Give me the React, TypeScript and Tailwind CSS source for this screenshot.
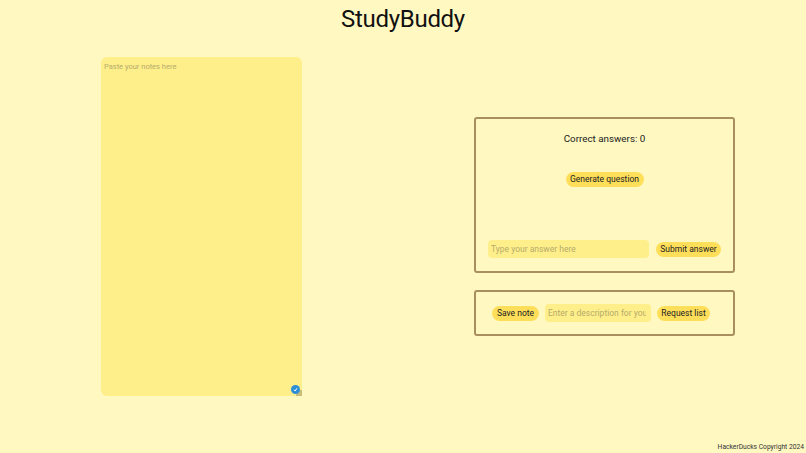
export default function App() {
  return (
    <div className="w-[806px] h-[453px] overflow-hidden flex flex-col bg-[#fff8c1] text-[#222] font-['Roboto','Liberation_Sans',sans-serif]">
      <h1 className="h-[57px] text-center text-[24px] tracking-[-0.3px] leading-[38px] text-[#111]">StudyBuddy</h1>

      <div className="flex h-[339px]">
        <div className="relative ml-[101px] w-[201px] h-[339px]">
          <textarea
            className="block w-full h-full resize-none rounded-[6px] bg-[#ffef8a] px-[3px] py-[4px] text-[7.5px] leading-[11px] outline-none placeholder:text-[#b5ab6c]"
            placeholder="Paste your notes here"
          />
          <div className="absolute right-0 bottom-0 w-[6px] h-[6px] bg-[#c9bd7c]" />
          <div className="absolute right-[2px] bottom-[2px] w-[9px] h-[9px] rounded-full bg-[#2b8fd8] flex items-center justify-center">
            <svg width="5" height="5" viewBox="0 0 10 10" fill="none" stroke="#fff" strokeWidth="2">
              <path d="M2 5.5 4.2 8 8 2.5" />
            </svg>
          </div>
        </div>

        <div className="ml-[172px] w-[261px] pt-[60px] flex flex-col gap-[17px]">
          <div className="h-[156px] rounded-[3px] border-2 border-[#a98f5f] flex flex-col items-center">
            <p className="mt-[12px] text-[9.8px] leading-[15px]">Correct answers: 0</p>
            <button className="mt-[26px] w-[78px] h-[15px] rounded-full bg-[#ffdf5a] text-[8.5px] leading-[15px] whitespace-nowrap">Generate question</button>
            <div className="mt-auto mb-[13px] w-full pl-[12px] flex items-center">
              <input
                className="w-[161px] h-[18px] rounded-[4px] bg-[#ffef8a] pl-[3px] pr-[5px] text-[8.5px] outline-none placeholder:text-[#b5ab6c]"
                placeholder="Type your answer here"
              />
              <button className="ml-[7px] w-[65px] h-[15px] rounded-full bg-[#ffdf5a] text-[8.5px] leading-[15px] whitespace-nowrap">Submit answer</button>
            </div>
          </div>

          <div className="h-[46px] rounded-[3px] border-2 border-[#a98f5f] flex items-center pl-[16px] gap-[6px]">
            <button className="w-[47px] h-[15px] rounded-full bg-[#ffdf5a] text-[8.5px] leading-[15px] whitespace-nowrap">Save note</button>
            <input
              className="w-[106px] h-[18px] rounded-[4px] bg-[#ffef8a] pl-[3px] pr-[5px] text-[8.5px] outline-none placeholder:text-[#b5ab6c]"
              placeholder="Enter a description for your note"
            />
            <button className="w-[53px] h-[15px] rounded-full bg-[#ffdf5a] text-[8.5px] leading-[15px] whitespace-nowrap">Request list</button>
          </div>
        </div>
      </div>

      <footer className="mt-auto pr-[2px] pb-[1px] text-right text-[6.7px] leading-[10px] text-[#333]">HackerDucks Copyright 2024</footer>
    </div>
  );
}
